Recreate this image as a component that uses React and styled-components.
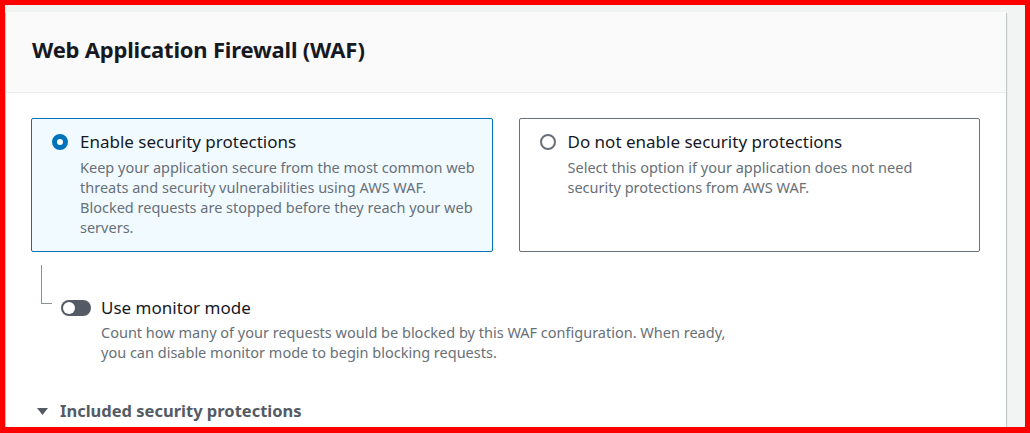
import styled, { createGlobalStyle } from "styled-components";
import { useState } from "react";

const GlobalStyle = createGlobalStyle`
    body {
        margin: 0;
        font-family: "Noto Sans", "Open Sans", Arial, sans-serif;
        color: #16191f;
    }
`;

const options = [
    {
        id: "enable",
        label: "Enable security protections",
        description: "Keep your application secure from the most common web threats and security vulnerabilities using AWS WAF. Blocked requests are stopped before they reach your web servers.",
    },
    {
        id: "disable",
        label: "Do not enable security protections",
        description: "Select this option if your application does not need security protections from AWS WAF.",
    },
];

function App() {
    const [selected, setSelected] = useState("enable");
    const [monitor, setMonitor] = useState(false);

    return (
        <Frame>
            <GlobalStyle />
            <Card>
                <Header>
                    <Title>Web Application Firewall (WAF)</Title>
                </Header>
                <Body>
                    <Tiles>
                        {options.map(opt => (
                            <Tile key={opt.id} active={selected === opt.id} onClick={() => setSelected(opt.id)}>
                                <Radio active={selected === opt.id} />
                                <TileText>
                                    <Label>{opt.label}</Label>
                                    <Description>{opt.description}</Description>
                                </TileText>
                            </Tile>
                        ))}
                    </Tiles>

                    <MonitorRow>
                        <Connector />
                        <MonitorBlock>
                            <ToggleLine>
                                <Toggle on={monitor} onClick={() => setMonitor(!monitor)}>
                                    <Knob on={monitor} />
                                </Toggle>
                                <Label>Use monitor mode</Label>
                            </ToggleLine>
                            <MonitorDescription>
                                Count how many of your requests would be blocked by this WAF configuration. When ready, you can disable monitor mode to begin blocking requests.
                            </MonitorDescription>
                        </MonitorBlock>
                    </MonitorRow>

                    <Expander>
                        <Caret viewBox="0 0 11 7">
                            <path d="M0 0 H11 L5.5 7 Z" fill="#545b64" />
                        </Caret>
                        <ExpanderTitle>Included security protections</ExpanderTitle>
                    </Expander>
                </Body>
            </Card>
        </Frame>
    );
}

export default App;

const Frame = styled.div`
    box-sizing: border-box;
    height: 433px;
    border: 5px solid #ff0000;
    border-bottom-width: 6px;
    background-color: #f2f3f3;
    padding: 7px 19px 0 1px;
    overflow: hidden;
`;

const Card = styled.section`
    background-color: #ffffff;
    box-shadow: 0 1px 1px 0 rgba(0, 28, 36, 0.3), 1px 1px 1px 0 rgba(0, 28, 36, 0.15), -1px 1px 1px 0 rgba(0, 28, 36, 0.15);
    height: 100%;
`;

const Header = styled.div`
    box-sizing: border-box;
    height: 81px;
    display: flex;
    align-items: center;
    padding: 0 25px 6px 26px;
    background-color: #fafafa;
    border-bottom: 1px solid #eaeded;
`;

const Title = styled.h2`
    margin: 0;
    font-size: 22px;
    line-height: 26px;
    letter-spacing: -0.2px;
    font-weight: 700;
    color: #16191f;
`;

const Body = styled.div`
    padding: 25px 26px 0 25px;
`;

const Tiles = styled.div`
    display: grid;
    grid-template-columns: 1fr 1fr;
    gap: 26px;
`;

const Tile = styled.div`
    box-sizing: border-box;
    height: 134px;
    display: flex;
    align-items: flex-start;
    gap: 12px;
    padding: 11px 14px 14px 20px;
    border: 1px solid ${({ active }) => active ? "#0073bb" : "#687078"};
    background-color: ${({ active }) => active ? "#f1faff" : "#ffffff"};
    border-radius: 2px;
    cursor: pointer;
`;

const Radio = styled.span`
    box-sizing: border-box;
    flex: none;
    width: 16px;
    height: 16px;
    margin-top: 4px;
    border-radius: 50%;
    background-color: #ffffff;
    border: ${({ active }) => active ? "5px solid #0073bb" : "2px solid #687078"};
`;

const TileText = styled.div`
    display: flex;
    flex-direction: column;
    gap: 4px;
`;

const Label = styled.div`
    font-size: 17px;
    line-height: 23px;
    color: #16191f;
`;

const Description = styled.div`
    font-size: 14.5px;
    line-height: 20px;
    color: #687078;
`;

const MonitorRow = styled.div`
    display: flex;
    align-items: flex-start;
    margin-top: 13px;
    padding-left: 10px;
`;

const Connector = styled.div`
    flex: none;
    width: 10px;
    height: 38px;
    border-left: 1px solid #879596;
    border-bottom: 1px solid #879596;
`;

const MonitorBlock = styled.div`
    margin-top: 31px;
    margin-left: 9px;
    display: flex;
    flex-direction: column;
    gap: 3px;
`;

const ToggleLine = styled.div`
    display: flex;
    align-items: center;
    gap: 10px;
`;

const Toggle = styled.span`
    box-sizing: border-box;
    width: 30px;
    height: 16px;
    border-radius: 8px;
    padding: 2px;
    display: flex;
    justify-content: ${({ on }) => on ? "flex-end" : "flex-start"};
    background-color: ${({ on }) => on ? "#0073bb" : "#545b64"};
    cursor: pointer;
`;

const Knob = styled.span`
    width: 12px;
    height: 12px;
    border-radius: 50%;
    background-color: #ffffff;
`;

const MonitorDescription = styled(Description)`
    padding-left: 40px;
    max-width: 632px;
`;

const Expander = styled.div`
    display: flex;
    align-items: center;
    gap: 12px;
    margin-top: 38px;
    padding-left: 6px;
`;

const Caret = styled.svg`
    width: 11px;
    height: 7px;
    flex: none;
`;

const ExpanderTitle = styled.div`
    font-size: 16.5px;
    line-height: 22px;
    font-weight: 700;
    color: #545b64;
`;
